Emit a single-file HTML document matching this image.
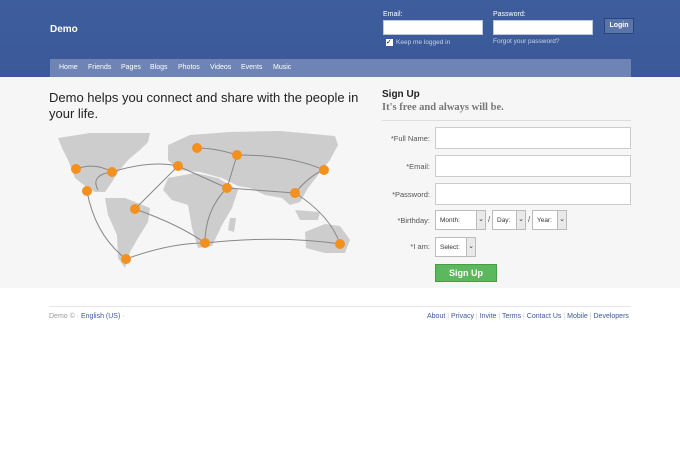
<!DOCTYPE html>
<html><head><style>
*{margin:0;padding:0;box-sizing:border-box}
body{width:680px;height:459px;background:#fff;font-family:"Liberation Sans",Tahoma,sans-serif;position:relative;overflow:hidden}
.a{position:absolute}
#hd{left:0;top:0;width:680px;height:77px;background:linear-gradient(#3e5d9c,#3b5998)}
#nav{left:50px;top:59px;width:581px;height:18px;background:#6d84b4;font-size:7px;color:#fff}
#nav span{position:absolute;top:5px}
#main{left:0;top:77px;width:680px;height:211px;background:#f6f6f6}
.lbl{font-size:7px;color:#fff}
.inp{background:#fff;border:1px solid #bdc7d8}
.fl{font-size:7.5px;color:#555;text-align:right;width:58px;left:372px}
.fi{left:435px;width:196px;height:22px;background:#fff;border:1px solid #ccc}
.sel{height:20px;background:#fff;border:1px solid #bbb;font-size:6.5px;color:#333;padding:6px 0 0 4px}
.sel i{position:absolute;right:0;top:0;width:9px;height:18px;background:#e9e9e9;border-left:1px solid #bbb;font-style:normal;font-size:7px;text-align:center;line-height:17px}
.ft{font-size:7px;color:#3b5998;top:313px}
</style></head><body>
<div class="a" id="hd"></div>
<div class="a" style="left:50px;top:24px;color:#fff;font-weight:bold;font-size:10px">Demo</div>
<div class="a lbl" style="left:383px;top:11px">Email:</div>
<div class="a inp" style="left:383px;top:20px;width:100px;height:15px"></div>
<div class="a lbl" style="left:493px;top:11px">Password:</div>
<div class="a inp" style="left:493px;top:20px;width:100px;height:15px"></div>
<div class="a" style="left:604px;top:18px;width:30px;height:16px;background:#5b74a8;border:1px solid #29447e;color:#fff;font-size:7px;font-weight:bold;text-align:center;line-height:14px">Login</div>
<div class="a" style="left:386px;top:39px;width:7px;height:7px;background:#fff;font-size:7px;line-height:7px;color:#000">✓</div>
<div class="a" style="left:396px;top:39px;font-size:6.5px;color:#c8d2e8">Keep me logged in</div>
<div class="a" style="left:493px;top:38px;font-size:6.5px;color:#c8d2e8">Forgot your password?</div>
<div class="a" id="nav"><span style="left:9px">Home</span><span style="left:38px">Friends</span><span style="left:71px">Pages</span><span style="left:100px">Blogs</span><span style="left:128px">Photos</span><span style="left:160px">Videos</span><span style="left:191px">Events</span><span style="left:223px">Music</span></div>
<div class="a" id="main"></div>
<div class="a" style="left:49px;top:90px;font-size:13px;color:#222;line-height:16px;width:330px">Demo helps you connect and share with the people in your life.</div>
<svg class="a" style="left:50px;top:125px" width="320" height="145" viewBox="50 125 320 145">
<g fill="#cdcdcd">
<path d="M58,138 L90,133 L150,133 L148,142 L140,150 L128,160 L118,172 L112,182 L105,192 L95,192 L85,186 L75,178 L68,160 L62,148Z"/>
<path d="M105,198 L125,198 L150,208 L148,222 L138,238 L130,252 L125,268 L118,258 L117,235 L108,215Z"/>
<path d="M168,145 L190,135 L230,132 L280,131 L335,136 L338,145 L330,160 L318,175 L308,188 L300,202 L290,205 L282,198 L265,195 L250,188 L238,186 L222,178 L200,172 L178,170 L168,160Z"/>
<path d="M168,178 L195,173 L218,178 L238,190 L232,208 L222,225 L212,246 L198,248 L192,228 L188,205 L172,200 L163,190Z"/>
<path d="M305,232 L325,224 L340,226 L350,240 L345,253 L325,253 L306,248Z"/>
<path d="M295,210 L320,212 L318,220 L300,220Z"/>
<path d="M230,218 L236,218 L234,232 L228,230Z"/>
</g>
<g fill="none" stroke="#888" stroke-width="1">
<path d="M76,169 Q95,162 112,172"/><path d="M112,172 Q150,160 178,166"/><path d="M178,166 L135,209"/><path d="M178,166 L227,188"/>
<path d="M197,148 Q215,148 237,155"/><path d="M237,155 Q290,155 324,170"/><path d="M237,155 L227,188"/><path d="M227,188 L295,193"/>
<path d="M295,193 Q310,175 324,170"/><path d="M295,193 Q330,215 340,244"/><path d="M227,188 Q205,210 205,243"/>
<path d="M135,209 Q180,225 205,243"/><path d="M205,243 Q280,235 340,244"/><path d="M126,259 Q170,243 205,243"/>
<path d="M87,191 Q95,235 126,259"/><path d="M112,172 Q90,175 98,190"/>
</g>
<g fill="#f39020">
<circle cx="76" cy="169" r="5"/><circle cx="112" cy="172" r="5"/><circle cx="87" cy="191" r="5"/><circle cx="135" cy="209" r="5"/><circle cx="178" cy="166" r="5"/><circle cx="197" cy="148" r="5"/><circle cx="237" cy="155" r="5"/><circle cx="227" cy="188" r="5"/><circle cx="295" cy="193" r="5"/><circle cx="324" cy="170" r="5"/><circle cx="205" cy="243" r="5"/><circle cx="340" cy="244" r="5"/><circle cx="126" cy="259" r="5"/>
</g></svg>
<div class="a" style="left:382px;top:89px;font-size:10px;font-weight:bold;color:#222">Sign Up</div>
<div class="a" style="left:382px;top:102px;font-size:10.5px;font-weight:bold;color:#777;font-family:'Liberation Serif',serif">It's free and always will be.</div>
<div class="a" style="left:382px;top:120px;width:249px;height:1px;background:#ddd"></div>
<div class="a fl" style="top:134px">*Full Name:</div><div class="a fi" style="top:127px"></div>
<div class="a fl" style="top:162px">*Email:</div><div class="a fi" style="top:155px"></div>
<div class="a fl" style="top:190px">*Password:</div><div class="a fi" style="top:183px"></div>
<div class="a fl" style="top:216px">*Birthday:</div>
<div class="a sel" style="left:435px;top:210px;width:51px">Month:<i>⌄</i></div>
<div class="a" style="left:488px;top:215px;font-size:8px;color:#555">/</div>
<div class="a sel" style="left:492px;top:210px;width:34px">Day:<i>⌄</i></div>
<div class="a" style="left:528px;top:215px;font-size:8px;color:#555">/</div>
<div class="a sel" style="left:532px;top:210px;width:35px">Year:<i>⌄</i></div>
<div class="a fl" style="top:242px">*I am:</div>
<div class="a sel" style="left:435px;top:237px;width:41px">Select:<i>⌄</i></div>
<div class="a" style="left:435px;top:264px;width:62px;height:18px;background:#5cb85c;border:1px solid #4a9a4a;color:#fff;font-size:9px;font-weight:bold;text-align:center;line-height:16px">Sign Up</div>
<div class="a" style="left:49px;top:306px;width:582px;height:1px;background:#e5e5e5"></div>
<div class="a ft" style="left:49px;color:#999">Demo © · <span style="color:#3b5998">English (US)</span> ·</div>
<div class="a ft" style="left:427px">About <span style="color:#ccc">|</span> Privacy <span style="color:#ccc">|</span> Invite <span style="color:#ccc">|</span> Terms <span style="color:#ccc">|</span> Contact Us <span style="color:#ccc">|</span> Mobile <span style="color:#ccc">|</span> Developers</div>
</body></html>
